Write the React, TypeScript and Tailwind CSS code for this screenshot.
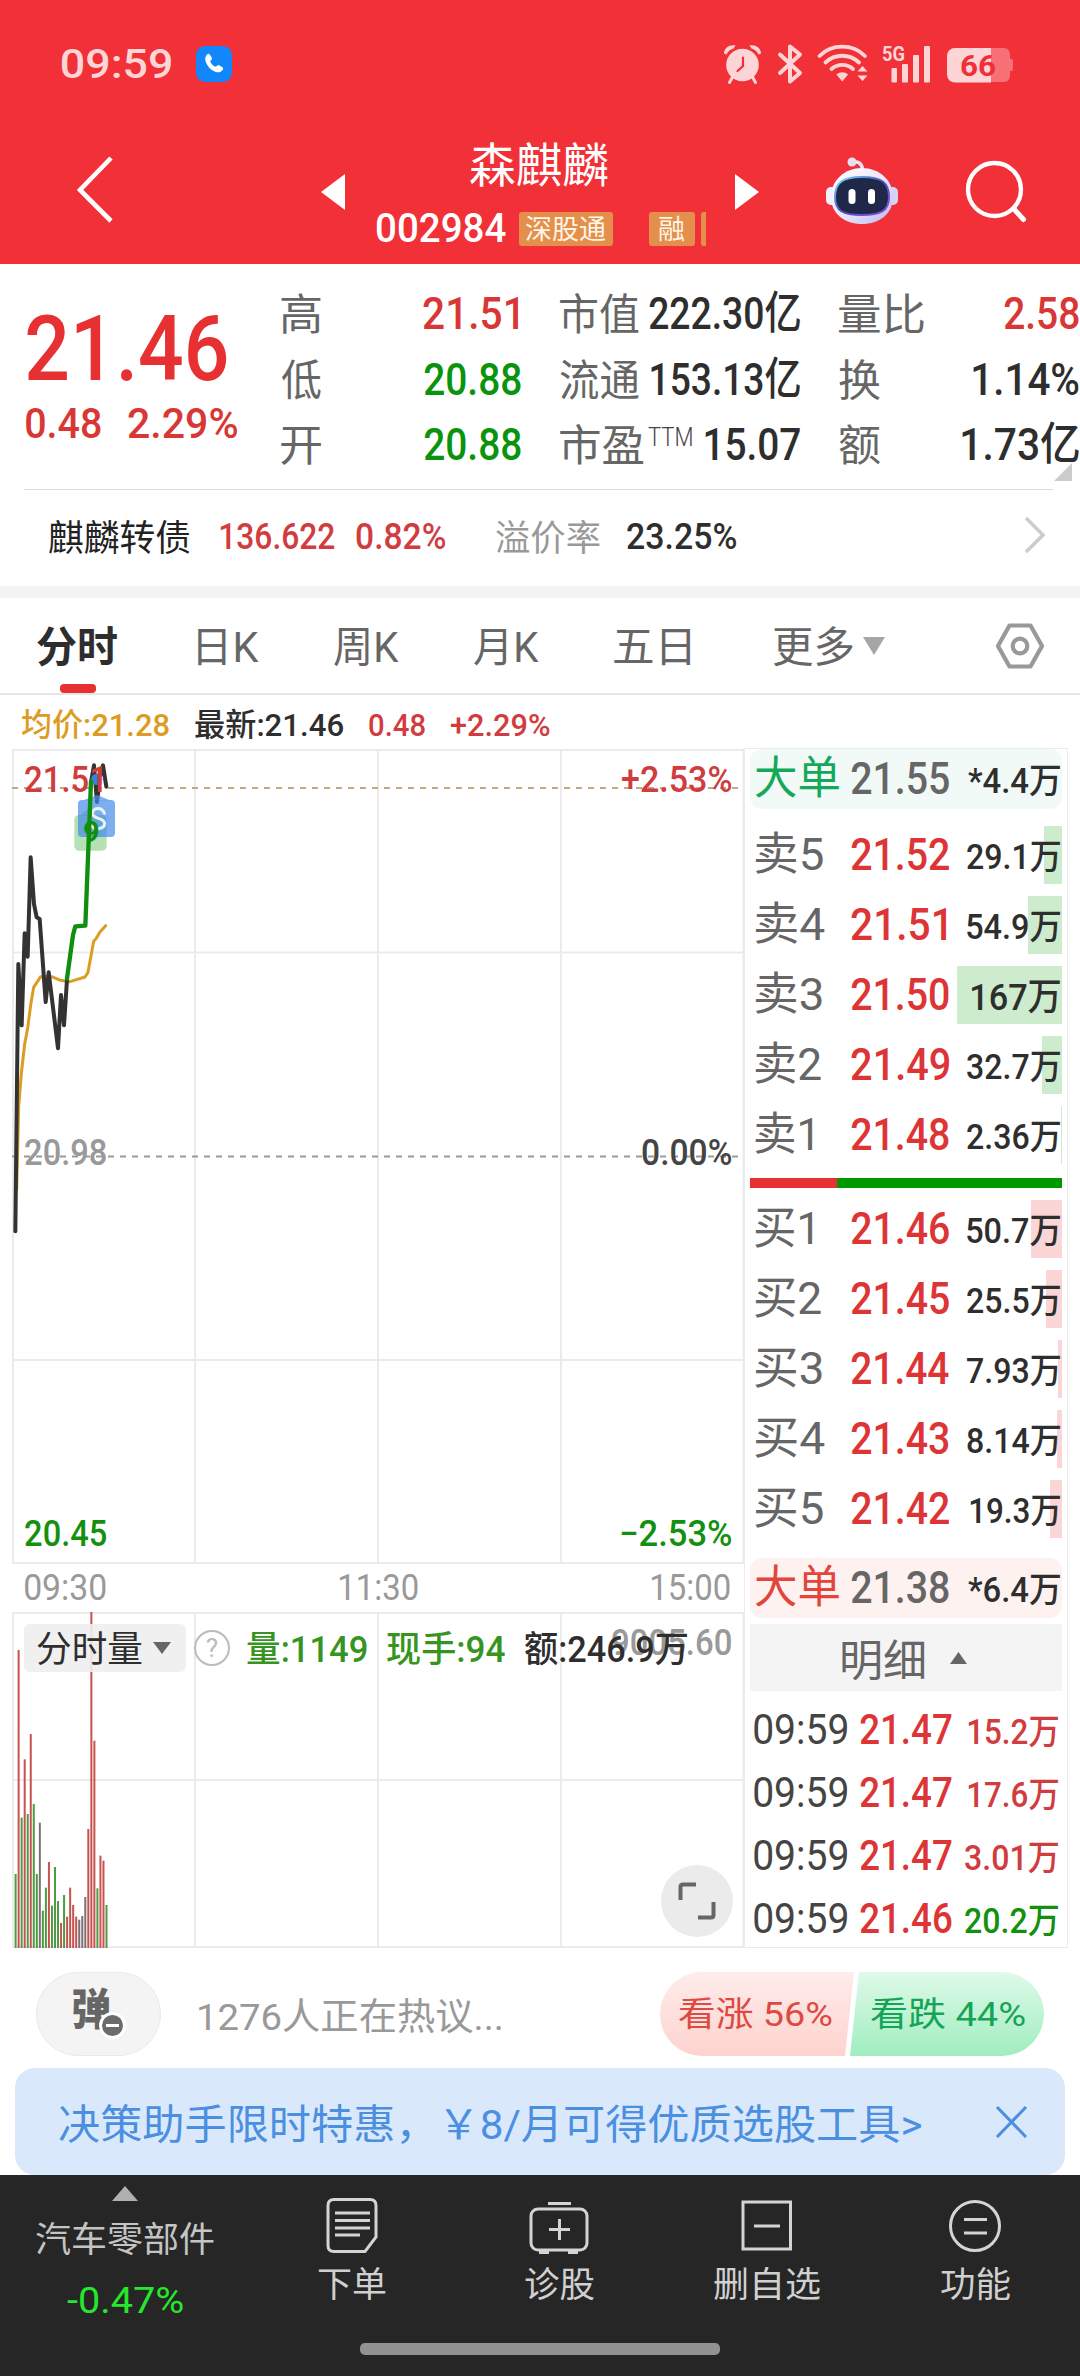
import { useLayoutEffect, useRef } from "react";
import type { ReactNode } from "react";
import clsx from "clsx";

// Text drawn so that its ink spans exactly the width of its box.
function Fit({ children, className = "" }: { children: string; className?: string }) {
  const box = useRef<HTMLDivElement>(null);
  const ink = useRef<HTMLSpanElement>(null);
  useLayoutEffect(() => {
    if (!box.current || !ink.current) return;
    const cs = getComputedStyle(ink.current);
    const ctx = document.createElement("canvas").getContext("2d");
    if (!ctx) return;
    ctx.font = `${cs.fontWeight} ${cs.fontSize} ${cs.fontFamily}`;
    const m = ctx.measureText(children);
    const start = -m.actualBoundingBoxLeft;
    const width = m.actualBoundingBoxRight - start;
    const s = box.current.clientWidth / width;
    const drop = /[\u4e00-\u9fff]/.test(children) && !/\d/.test(children) ? 2 : 0;
    ink.current.style.transform = `translate(${-start * s}px, ${drop}px) scaleX(${s})`;
  }, [children]);
  return (
    <div ref={box} className={clsx("shrink-0 leading-none", className)}>
      <span ref={ink} className="block w-max origin-left whitespace-pre leading-none">
        {children}
      </span>
    </div>
  );
}

function StatusBar() {
  return (
    <div className="flex h-[128px] items-center text-[#fdd5d7]">
      <Fit className="ml-[62px] w-[109px] text-[41px] font-medium">09:59</Fit>
      <div className="ml-[25px] flex h-[36px] w-[36px] items-center justify-center rounded-[9px] bg-[#1287fb]">
        <svg viewBox="0 0 24 24" className="h-[22px] w-[22px]" fill="#fff">
          <path d="M4.5 1.5c1-.9 2.300-.7 3 .3l2 3.200c.6 1 .3 2-.5 2.700l-1.300 1.200c1.200 2.900 3.300 5 6.200 6.200l1.500-1.300c.8-.7 1.800-.8 2.700-.2l3 2c1 .7 1.200 2 .3 3-1.900 2.300-4.300 3.100-7.300 2.100C8.600 19 4.800 15 2.900 9.400 1.900 6.300 2.500 3.500 4.500 1.500z" />
        </svg>
      </div>
      <svg className="ml-[488px] h-[48px] w-[300px]" viewBox="0 0 300 48" fill="#fdd5d7">
        <circle cx="22.500" cy="25" r="16.300" />
        <path d="M4 13.500C4 8 9 4.500 15.500 5.300L13.500 8.500C10 9.500 7.700 11.500 6.500 14.500zM41 13.500C41 8 36 4.500 29.500 5.300L31.500 8.500C35 9.500 37.300 11.500 38.500 14.500z" />
        <path d="M12.500 37l-3 5.500M32.500 37l3 5.500" stroke="#fdd5d7" strokeWidth="3" strokeLinecap="round" />
        <path d="M23 17.500v8.500l-5.500 5" fill="none" stroke="#f12f37" strokeWidth="2.200" strokeLinecap="round" />
        <path d="M60 14.500l20 18.500-10 8.500v-35l10 8-20 18.500" fill="none" stroke="#fdd5d7" strokeWidth="4" strokeLinejoin="round" strokeLinecap="round" />
        <g fill="none" stroke="#fdd5d7" strokeWidth="3.800" strokeLinecap="round">
          <path d="M99.500 16c12-12.500 33.500-12.500 45.500 0" />
          <path d="M105.500 22.500c9.500-9 24-9 33.500 0" />
          <path d="M111.500 29c6-5.500 15.500-5.500 21.500 0" />
        </g>
        <path d="M116.500 34.500c3.500-3 8.300-3 11.500 0l-5.800 7zM137.500 31.500l5-5.500 5 5.500zM137.500 35.500l5 5.500 5-5.500z" />
        <text x="162" y="20.500" fontSize="20" fontWeight="700" textLength="23" lengthAdjust="spacingAndGlyphs">5G</text>
        <rect x="171.500" y="28" width="5.500" height="14.500" rx="1" />
        <rect x="182" y="24" width="6" height="18.500" rx="1" />
        <rect x="193" y="15" width="6" height="27.500" rx="1" />
        <rect x="204" y="6" width="6" height="36.500" rx="1" />
        <path d="M271 8h13a6 6 0 0 1 6 6v22a6 6 0 0 1-6 6h-13zM290 19h1.500q1.500 0 1.500 2v8q0 2-1.500 2H290z" fill="#f77075" />
        <path d="M235 8h36v34.500h-36a8 8 0 0 1-8-8V16a8 8 0 0 1 8-8z" />
        <text x="240" y="36" fontSize="30" fontWeight="700" fill="#f12f37" textLength="36" lengthAdjust="spacingAndGlyphs">66</text>
      </svg>
    </div>
  );
}

function Tag({ children, className = "" }: { children?: ReactNode; className?: string }) {
  return (
    <div className={clsx("flex h-[34px] shrink-0 items-center justify-center rounded-[3px] bg-[#e48f4c] text-[#fff5e6]", className)}>
      {children}
    </div>
  );
}

function Robot() {
  return (
    <svg className="mt-[-10px] ml-[66px] h-[70px] w-[74px]" viewBox="0 0 74 70">
      <defs>
        <linearGradient id="shell" x1="0" y1="0" x2="1" y2="1">
          <stop offset="0" stopColor="#fff" />
          <stop offset="0.500" stopColor="#ece8fa" />
          <stop offset="1" stopColor="#b9b9f0" />
        </linearGradient>
        <linearGradient id="rim" x1="0" y1="0" x2="1" y2="1">
          <stop offset="0" stopColor="#7ce3f5" />
          <stop offset="0.500" stopColor="#4d4fc0" />
          <stop offset="1" stopColor="#8f4be0" />
        </linearGradient>
      </defs>
      <path d="M27 6c6-1 10 1 10.500 8" fill="none" stroke="#efe6f7" strokeWidth="3.500" />
      <circle cx="27" cy="6" r="4.500" fill="#e9def3" />
      <rect x="1" y="31" width="12" height="18" rx="5" fill="#f3effc" />
      <rect x="61" y="31" width="12" height="18" rx="5" fill="#d6d2f5" />
      <path d="M37 12c17 0 31 12 31 29S54 68 37 68 6 58 6 41 20 12 37 12z" fill="url(#shell)" />
      <path d="M37 21c20 0 27 6 27 20S56 59 37 59 10 55 10 41s7-20 27-20z" fill="#1f2848" stroke="url(#rim)" strokeWidth="2" />
      <rect x="23.500" y="33" width="7" height="15" rx="3.500" fill="#fff" />
      <rect x="43" y="33" width="7" height="15" rx="3.500" fill="#fff" />
    </svg>
  );
}

function TitleBar() {
  return (
    <div className="flex h-[136px] items-center text-white">
      <svg className="mt-[-14px] ml-[72px] h-[72px] w-[46px]" viewBox="0 0 46 72" fill="none" stroke="#fff" strokeWidth="4.600">
        <path d="M39 5L8 37l31 31" />
      </svg>
      <svg className="ml-[203px] mt-[-8px] h-[36px] w-[24px]" viewBox="0 0 24 36" fill="#fff">
        <path d="M24 0v36L0 18z" />
      </svg>
      <div className="ml-[32px] flex h-[136px] w-[358px] shrink-0 flex-col">
        <Fit className="mt-[12px] ml-[93px] w-[138px] text-[47px]">森麒麟</Fit>
        <div className="mt-[21px] flex h-[41px] items-center">
          <Fit className="w-[129px] text-[41px] font-medium">002984</Fit>
          <Tag className="ml-[13px] w-[94px]">
            <Fit className="w-[80px] text-[27px]">深股通</Fit>
          </Tag>
          <Tag className="ml-[36px] w-[46px]">
            <Fit className="w-[26px] text-[27px]">融</Fit>
          </Tag>
          <Tag className="ml-[6px] w-[5px] rounded-r-none" />
        </div>
      </div>
      <svg className="mt-[-8px] h-[36px] w-[24px]" viewBox="0 0 24 36" fill="#fff">
        <path d="M0 0v36l24-18z" />
      </svg>
      <Robot />
      <svg className="ml-[64px] mt-[-10px] h-[66px] w-[66px]" viewBox="0 0 66 66" fill="none" stroke="#fff" strokeWidth="4.300">
        <circle cx="31.500" cy="31.500" r="26.500" />
        <path d="M50.500 50.500l10 11" strokeLinecap="round" strokeWidth="5" />
      </svg>
    </div>
  );
}

function QuoteRow({ children }: { children: ReactNode }) {
  return <div className="flex h-[65.500px] items-center gap-[39px]">{children}</div>;
}
function QuoteCell({ children }: { children: ReactNode }) {
  return <div className="flex w-[240px] items-center justify-between text-[45px] font-medium text-[#2e2e2e]">{children}</div>;
}
const label = "text-[43px] font-normal text-[#666]";

function Quote() {
  return (
    <div className="flex h-[225px]">
      <div className="w-[281px] shrink-0 pl-[27px] font-medium text-[#d93636]">
        <Fit className="mt-[40px] w-[200px] text-[91px] text-[#e73032]">21.46</Fit>
        <div className="mt-[7px] flex">
          <Fit className="ml-[-1px] w-[75px] text-[43px]">0.48</Fit>
          <Fit className="ml-[27px] w-[109px] text-[43px]">2.29%</Fit>
        </div>
      </div>
      <div className="relative w-[799px] pt-[17px]">
        <QuoteRow>
          <QuoteCell>
            <Fit className={clsx(label, "w-[40px]")}>高</Fit>
            <Fit className="mr-[3px] w-[95px] text-[#d93636]">21.51</Fit>
          </QuoteCell>
          <QuoteCell>
            <Fit className={clsx(label, "w-[79px]")}>市值</Fit>
            <Fit className="w-[151px]">222.30亿</Fit>
          </QuoteCell>
          <QuoteCell>
            <Fit className={clsx(label, "w-[85px]")}>量比</Fit>
            <Fit className="w-[75px] text-[#d93636]">2.58</Fit>
          </QuoteCell>
        </QuoteRow>
        <QuoteRow>
          <QuoteCell>
            <Fit className={clsx(label, "w-[40px]")}>低</Fit>
            <Fit className="w-[97px] text-[#0a930c]">20.88</Fit>
          </QuoteCell>
          <QuoteCell>
            <Fit className={clsx(label, "w-[79px]")}>流通</Fit>
            <Fit className="w-[149px]">153.13亿</Fit>
          </QuoteCell>
          <QuoteCell>
            <Fit className={clsx(label, "w-[41px]")}>换</Fit>
            <Fit className="w-[106px]">1.14%</Fit>
          </QuoteCell>
        </QuoteRow>
        <QuoteRow>
          <QuoteCell>
            <Fit className={clsx(label, "w-[40px]")}>开</Fit>
            <Fit className="w-[97px] text-[#0a930c]">20.88</Fit>
          </QuoteCell>
          <QuoteCell>
            <Fit className={clsx(label, "w-[84px]")}>市盈</Fit>
            <Fit className="mt-[-15px] mr-[9px] w-[44px] text-[25px] font-light text-[#444]">TTM</Fit>
            <Fit className="w-[95px]">15.07</Fit>
          </QuoteCell>
          <QuoteCell>
            <Fit className={clsx(label, "w-[41px]")}>额</Fit>
            <Fit className="w-[117px]">1.73亿</Fit>
          </QuoteCell>
        </QuoteRow>
        <svg className="absolute top-[199px] left-[773px] h-[18px] w-[18px]" viewBox="0 0 18 18" fill="#ccc">
          <path d="M18 0v18H0z" />
        </svg>
      </div>
    </div>
  );
}

function BondRow() {
  return (
    <div className="flex h-[96px] items-center pb-[2px] text-[36px] font-medium text-[#d13c3e]">
      <Fit className="ml-[49px] w-[141px] font-normal text-[#222]">麒麟转债</Fit>
      <Fit className="ml-[30px] w-[115px]">136.622</Fit>
      <Fit className="ml-[21px] w-[89px]">0.82%</Fit>
      <Fit className="ml-[51px] w-[104px] font-normal text-[#999]">溢价率</Fit>
      <Fit className="ml-[27px] w-[109px] text-[#2e2e2e]">23.25%</Fit>
      <svg className="ml-[288px] mt-[-4px] h-[38px] w-[22px]" viewBox="0 0 22 38" fill="none" stroke="#ccc" strokeWidth="3.500">
        <path d="M2 2l17 17L2 36" />
      </svg>
    </div>
  );
}

function Tabs() {
  return (
    <div className="relative flex h-[97px] items-center border-b-2 border-[#e6e6e6] text-[42px] text-[#666]">
      <Fit className="ml-[37px] w-[80px] font-bold text-[#2e2e2e]">分时</Fit>
      <Fit className="ml-[81px] w-[61px]">日K</Fit>
      <Fit className="ml-[75px] w-[65px]">周K</Fit>
      <Fit className="ml-[75px] w-[65px]">月K</Fit>
      <Fit className="ml-[75px] w-[76px]">五日</Fit>
      <Fit className="ml-[83px] w-[80px]">更多</Fit>
      <svg className="ml-[10px] h-[18px] w-[22px]" viewBox="0 0 22 18" fill="#a6a6a6">
        <path d="M0 0h22L11 18z" />
      </svg>
      <svg className="ml-[110px] h-[48px] w-[50px]" viewBox="0 0 50 48" fill="none" stroke="#999" strokeWidth="4.200" strokeLinejoin="round">
        <path d="M14.500 3.500h21L47 24 35.500 44.500h-21L3 24z" />
        <circle cx="25" cy="24" r="7.300" />
      </svg>
      <div className="absolute bottom-0 left-[60px] h-[9px] w-[36px] rounded-[4px] bg-[#e63031]" />
    </div>
  );
}

function InfoLine() {
  return (
    <div className="flex h-[53px] items-center pt-[7px] text-[32px] font-medium text-[#d13c3e]">
      <Fit className="ml-[22px] w-[147px] text-[#dc9c22]">均价:21.28</Fit>
      <Fit className="ml-[26px] w-[148px] text-[#2e2e2e]">最新:21.46</Fit>
      <Fit className="ml-[26px] w-[56px]">0.48</Fit>
      <Fit className="ml-[26px] w-[99px]">+2.29%</Fit>
    </div>
  );
}

function PriceChart() {
  return (
    <div className="relative h-[816px] text-[36px] font-medium">
      <svg className="block h-[816px] w-[745px]" viewBox="0 748 745 816" fill="none">
        <g stroke="#ebebeb" strokeWidth="2">
          <path d="M12 750H744M12 952.500H744M12 1360H744M12 1563H744" />
          <path d="M13 749V1564M195 749V1564M378 749V1564M561 749V1564M743.500 749V1564" />
        </g>
        <path d="M12 788H740" stroke="#c2a884" strokeWidth="2" strokeDasharray="6 6" />
        <path d="M12 1156.500H740" stroke="#999" strokeWidth="2" strokeDasharray="6 6" />
        <g transform="translate(0 740) scale(0.33333)" strokeLinejoin="round" strokeLinecap="round">
          <path d="M50 1350L56 1100L64 1000L74 912L83 865L92 795L101 742L122 710H155L178 720L210 725L255 711L264 697L281 604L288 596L300 576L317 557" stroke="#dc9c22" strokeWidth="9" />
          <path d="M46 1474L55 672L65 856L74 580L83 650L92 352L102 492L110 532L119 537L137 786L146 697L174 925L183 765L192 856L201 718" stroke="#333" strokeWidth="12" />
          <path d="M273 126L282 76L291 186L300 110L309 76L319 140" stroke="#333" strokeWidth="12" />
          <rect x="223" y="225" width="97" height="107" rx="14" fill="#6cc46c" fillOpacity="0.500" />
          <path d="M238 228L265 205L290 228z" fill="#6cc46c" fillOpacity="0.500" />
          <path d="M250 181L291 165L330 181z" fill="#4f8fe8" fillOpacity="0.700" />
          <rect x="234" y="180" width="111" height="111" rx="12" fill="#3f87ea" fillOpacity="0.680" />
          <circle cx="290" cy="118" r="17" fill="#3f7fd8" />
          <path d="M313 220C306 200 278 202 277 220C277 238 313 232 314 250C314 268 284 272 274 256" stroke="#e8f5ef" strokeWidth="9" />
          <path d="M273 124L256 557L226 559L219 585L201 716" stroke="#0f8f10" strokeWidth="13" />
        </g>
        <text x="83" y="842" fontSize="29" fontWeight="700" fill="#0f8f10">9</text>
      </svg>
      <Fit className="absolute top-[14px] left-[25px] w-[77px] text-[#d13c3e]">21.51</Fit>
      <Fit className="absolute top-[14px] left-[622px] w-[109px] text-[#d13c3e]">+2.53%</Fit>
      <Fit className="absolute top-[387px] left-[25px] w-[81px] text-[#999]">20.98</Fit>
      <Fit className="absolute top-[387px] left-[642px] w-[89px] text-[#444]">0.00%</Fit>
      <Fit className="absolute top-[768px] left-[25px] w-[81px] text-[#14900f]">20.45</Fit>
      <Fit className="absolute top-[768px] left-[621px] w-[110px] text-[#14900f]">−2.53%</Fit>
    </div>
  );
}

// Height of each bar as a y position in chart space, with its colour.
const bars: [number, string][] = [
  [1122, "g"], [450, "r"], [953, "g"], [778, "r"], [942, "g"], [702, "r"], [912, "g"], [1122, "g"],
  [968, "n"], [1232, "g"], [1163, "g"], [1086, "r"], [1217, "g"], [1101, "g"], [1203, "g"], [1269, "r"],
  [1185, "g"], [1250, "r"], [1163, "r"], [1215, "r"], [1250, "r"], [1259, "n"], [1248, "n"], [1191, "n"],
  [987, "r"], [336, "r"], [722, "r"], [1165, "g"], [1067, "r"], [1082, "r"], [1215, "g"],
];
const barColor: Record<string, string> = { g: "#4f9a45", r: "#c8524f", n: "#7d7075" };

function VolumeChart() {
  return (
    <div className="relative h-[336px] text-[36px] font-medium">
      <svg className="block h-[336px] w-[745px]" viewBox="0 1612 745 336" fill="none">
        <g stroke="#ebebeb" strokeWidth="2">
          <path d="M12 1613H744M12 1780H744M12 1947H744" />
          <path d="M13 1612V1948M195 1612V1948M378 1612V1948M561 1612V1948M743.500 1612V1948" />
        </g>
        {bars.map(([top, c], i) => (
          <rect key={i} x={14.600 + i * 3.030} y={1500 + top / 3} width="2" height={448 - top / 3} fill={barColor[c]} />
        ))}
      </svg>
      <Fit className="absolute top-[13px] left-[612px] w-[119px] text-[#999]">9005.60</Fit>
      <div className="absolute top-[12px] left-[24px] flex h-[48px] items-center">
        <div className="flex h-[48px] w-[162px] items-center rounded-[6px] bg-[#eeeeee]/90 pl-[13px] text-[#2e2e2e]">
          <Fit className="w-[105px] font-normal">分时量</Fit>
          <svg className="ml-[11px] h-[12px] w-[18px]" viewBox="0 0 18 12" fill="#666">
            <path d="M0 0h18L9 12z" />
          </svg>
        </div>
        <div className="ml-[8px] flex h-[36px] w-[36px] items-center justify-center rounded-full border-2 border-[#bbb] text-[26px] leading-none font-normal text-[#bbb]">?</div>
        <Fit className="ml-[17px] mt-[3px] w-[120px] text-[#37941f]">量:1149</Fit>
        <Fit className="ml-[20px] mt-[3px] w-[118px] text-[#37941f]">现手:94</Fit>
        <Fit className="ml-[20px] mt-[3px] w-[162px] text-[#2e2e2e]">额:246.9万</Fit>
      </div>
      <div className="absolute top-[253px] left-[661px] flex h-[72px] w-[72px] items-center justify-center rounded-full bg-[#ebebeb]">
        <svg className="h-[38px] w-[38px]" viewBox="0 0 38 38" fill="none" stroke="#666" strokeWidth="4">
          <path d="M2.500 18V5q0-2.500 2.500-2.500h13M35.500 20v13q0 2.500-2.500 2.500H20" />
        </svg>
      </div>
    </div>
  );
}

interface Level {
  name: string;
  nameClass: string;
  price: string;
  qty: string;
  qtyClass: string;
  bar: string;
}
const sells: Level[] = [
  { name: "卖5", nameClass: "w-[68px]", price: "21.52", qty: "29.1万", qtyClass: "w-[93px]", bar: "w-[18px]" },
  { name: "卖4", nameClass: "w-[70px]", price: "21.51", qty: "54.9万", qtyClass: "w-[93px]", bar: "w-[34px]" },
  { name: "卖3", nameClass: "w-[67px]", price: "21.50", qty: "167万", qtyClass: "w-[88px] text-[37px]", bar: "w-[105px]" },
  { name: "卖2", nameClass: "w-[66px]", price: "21.49", qty: "32.7万", qtyClass: "w-[93px]", bar: "w-[20px]" },
  { name: "卖1", nameClass: "w-[58px]", price: "21.48", qty: "2.36万", qtyClass: "w-[93px]", bar: "w-[1px]" },
];
const buys: Level[] = [
  { name: "买1", nameClass: "w-[58px]", price: "21.46", qty: "50.7万", qtyClass: "w-[93px]", bar: "w-[31px]" },
  { name: "买2", nameClass: "w-[66px]", price: "21.45", qty: "25.5万", qtyClass: "w-[93px]", bar: "w-[16px]" },
  { name: "买3", nameClass: "w-[67px]", price: "21.44", qty: "7.93万", qtyClass: "w-[93px]", bar: "w-[4px]" },
  { name: "买4", nameClass: "w-[70px]", price: "21.43", qty: "8.14万", qtyClass: "w-[93px]", bar: "w-[5px]" },
  { name: "买5", nameClass: "w-[68px]", price: "21.42", qty: "19.3万", qtyClass: "w-[90px]", bar: "w-[12px]" },
];

function LevelRow({ row, sell }: { row: Level; sell?: boolean }) {
  return (
    <div className="relative flex h-[58px] items-center">
      <div className={clsx("absolute top-0 right-0 h-[58px]", sell ? "bg-[#cdebcd]" : "bg-[#fad6d6]", row.bar)} />
      <div className="relative mt-[-2px] w-[101px] pl-[5px] text-[45px] text-[#666]">
        <Fit className={row.nameClass}>{row.name}</Fit>
      </div>
      <Fit className={clsx("relative mt-[-2px] text-[45px] font-medium text-[#dd3435]", row.price.endsWith("1") ? "w-[95px]" : "w-[98px]")}>{row.price}</Fit>
      <div className="relative flex flex-1 justify-end pt-[5px] pr-[2px] text-[35px] font-medium text-[#2e2e2e]">
        <Fit className={row.qtyClass}>{row.qty}</Fit>
      </div>
    </div>
  );
}

function BigOrder({ price, qty, buy }: { price: string; qty: string; buy?: boolean }) {
  return (
    <div className={clsx("flex h-[60px] items-center rounded-[12px] pl-[5px] font-medium", buy ? "bg-[#fef2f1]" : "bg-[#f1faf6]")}>
      <Fit className={clsx("mt-[-6px] w-[84px] text-[45px] font-normal", buy ? "text-[#e2453c]" : "text-[#16a85a]")}>大单</Fit>
      <Fit className="ml-[12px] mt-[-2px] w-[98px] text-[45px] text-[#666]">{price}</Fit>
      <Fit className="ml-[19px] mt-[5px] w-[92px] text-[35px] text-[#2e2e2e]">{qty}</Fit>
    </div>
  );
}

const ticks = [
  ["21.47", "15.2万", "w-[90px] text-[#d13c3e]"],
  ["21.47", "17.6万", "w-[90px] text-[#d13c3e]"],
  ["21.47", "3.01万", "w-[93px] text-[#d13c3e]"],
  ["21.46", "20.2万", "w-[93px] text-[#14900f]"],
];

function OrderBook() {
  return (
    <div className="h-[1200px] w-[324px] border border-[#ebebeb] pr-[5px] pl-[5px]">
      <BigOrder price="21.55" qty="*4.4万" />
      <div className="mt-[17px] flex flex-col gap-[12px]">
        {sells.map((r) => (
          <LevelRow key={r.name} row={r} sell />
        ))}
      </div>
      <div className="mt-[14px] flex h-[10px]">
        <div className="w-[87px] bg-[#e83133]" />
        <div className="flex-1 bg-[#009a00]" />
      </div>
      <div className="mt-[12px] flex flex-col gap-[12px]">
        {buys.map((r) => (
          <LevelRow key={r.name} row={r} />
        ))}
      </div>
      <div className="mt-[20px]">
        <BigOrder price="21.38" qty="*6.4万" buy />
      </div>
      <div className="mt-[6px] flex h-[67px] items-center bg-[#f4f4f4] text-[43px] text-[#666]">
        <Fit className="ml-[92px] mt-[3px] w-[82px]">明细</Fit>
        <svg className="ml-[26px] h-[12px] w-[17px]" viewBox="0 0 17 12" fill="#666">
          <path d="M8.500 0L17 12H0z" />
        </svg>
      </div>
      <div className="mt-[7px]">
        {ticks.map(([price, qty, qtyClass], i) => (
          <div key={i} className="flex h-[63px] items-center font-medium">
            <Fit className="ml-[4px] w-[93px] text-[42px] font-normal text-[#444]">09:59</Fit>
            <Fit className="ml-[13px] w-[92px] text-[42px] text-[#dd3435]">{price}</Fit>
            <div className="flex flex-1 justify-end pt-[5px] pr-[4px] text-[35px]">
              <Fit className={qtyClass}>{qty}</Fit>
            </div>
          </div>
        ))}
      </div>
    </div>
  );
}

function Discussion() {
  return (
    <div className="flex h-[120px] items-start pt-[24px]">
      <div className="relative ml-[36px] h-[84px] w-[125px] rounded-full border border-[#e9e9e9] bg-[#f4f4f4]">
        <Fit className="absolute top-[14px] left-[36px] w-[37px] text-[43px] font-black text-[#666]">弹</Fit>
        <div className="absolute top-[39px] left-[62px] flex h-[27px] w-[27px] items-center justify-center rounded-full border-[3px] border-white bg-[#6b6b6b]">
          <div className="h-[3px] w-[13px] bg-white" />
        </div>
      </div>
      <Fit className="ml-[38px] mt-[27px] w-[302px] text-[37px] text-[#999]">1276人正在热议...</Fit>
      <div className="relative ml-[159px] flex h-[84px] w-[384px] items-center">
        <svg className="absolute inset-0 h-[84px] w-[384px]" viewBox="0 0 384 84">
          <defs>
            <linearGradient id="up" x1="0" y1="0" x2="0" y2="1">
              <stop offset="0" stopColor="#feeceb" />
              <stop offset="1" stopColor="#fdd3ce" />
            </linearGradient>
            <linearGradient id="down" x1="0" y1="0" x2="0" y2="1">
              <stop offset="0" stopColor="#dffaea" />
              <stop offset="1" stopColor="#a0edc0" />
            </linearGradient>
          </defs>
          <path d="M42 0H194L185 84H42A42 42 0 0 1 42 0z" fill="url(#up)" />
          <path d="M199 0H342A42 42 0 0 1 342 84H190z" fill="url(#down)" />
        </svg>
        <Fit className="relative ml-[19px] w-[153px] text-[34px] text-[#dd4a42]">看涨 56%</Fit>
        <Fit className="relative ml-[39px] w-[154px] text-[34px] text-[#15a456]">看跌 44%</Fit>
      </div>
    </div>
  );
}

function Banner() {
  return (
    <div className="mx-[15px] flex h-[107px] items-center rounded-[20px] bg-[#dae8fc]">
      <Fit className="ml-[44px] mt-[7px] w-[862px] text-[41px] text-[#4a8fe0]">决策助手限时特惠，￥8/月可得优质选股工具&gt;</Fit>
      <svg className="ml-[74px] h-[32px] w-[33px]" viewBox="0 0 33 32" fill="none" stroke="#4a8fe0" strokeWidth="3">
        <path d="M2 1l29 30M31 1L2 31" />
      </svg>
    </div>
  );
}

function NavItem({ className, icon, text, textClass }: { className: string; icon: ReactNode; text: string; textClass: string }) {
  return (
    <div className={clsx("flex w-[120px] shrink-0 flex-col items-center pt-[20px]", className)}>
      <svg className="h-[60px] w-[60px]" viewBox="0 0 60 60" fill="none" stroke="#d4d4d4" strokeWidth="3">
        {icon}
      </svg>
      <Fit className={clsx("mt-[11px] text-[35px] text-[#d0d0d0]", textClass)}>{text}</Fit>
    </div>
  );
}

function BottomNav() {
  return (
    <div className="relative flex h-[201px] bg-[#262626]">
      <div className="flex w-[249px] shrink-0 flex-col items-center pt-[11px]">
        <svg className="h-[15px] w-[26px]" viewBox="0 0 26 15" fill="#b0b0b0">
          <path d="M13 0l13 15H0z" />
        </svg>
        <Fit className="mt-[20px] w-[178px] text-[35px] text-[#c4c4c4]">汽车零部件</Fit>
        <Fit className="mt-[26px] w-[116px] text-[37px] text-[#25e72b]">-0.47%</Fit>
      </div>
      <NavItem
        className="ml-[43px]"
        text="下单"
        textClass="w-[68px]"
        icon={
          <>
            <path d="M12 4.500H48q6 0 6 6V42L43 56.500H12q-6 0-6-6v-40q0-6 6-6z" />
            <path d="M13 18H48M13 25.500H48M13 33H48M13 40H38" />
          </>
        }
      />
      <NavItem
        className="ml-[87px]"
        text="诊股"
        textClass="w-[69px]"
        icon={
          <>
            <rect x="2" y="14" width="56" height="41" rx="7" />
            <path d="M19 8.500H42M30.500 24v21M20 34.500H41M10 57.500H20M39 57.500H49" />
          </>
        }
      />
      <NavItem
        className="ml-[88px]"
        text="删自选"
        textClass="w-[106px]"
        icon={
          <>
            <rect x="6" y="7" width="47.500" height="47" />
            <path d="M17 31H43" />
          </>
        }
      />
      <NavItem
        className="ml-[88px]"
        text="功能"
        textClass="w-[69px]"
        icon={
          <>
            <circle cx="30" cy="31" r="24.500" />
            <path d="M19 24.500H42M19 38H42" />
          </>
        }
      />
      <div className="absolute top-[168px] left-[360px] h-[12px] w-[360px] rounded-[5px] bg-[#919191]" />
    </div>
  );
}

export default function App() {
  return (
    <div className="h-[2376px] w-[1080px] overflow-hidden bg-white font-[Roboto,'Noto_Sans_CJK_SC',sans-serif]">
      <header className="h-[264px] bg-[#f23038]">
        <StatusBar />
        <TitleBar />
      </header>
      <Quote />
      <div className="mr-[27px] ml-[24px] h-px bg-[#dedede]" />
      <BondRow />
      <div className="h-[12px] bg-[#f4f4f4]" />
      <Tabs />
      <InfoLine />
      <div className="flex h-[1200px]">
        <div className="w-[744px] shrink-0">
          <PriceChart />
          <div className="flex h-[48px] items-center pl-[25px] text-[36px] text-[#999]">
            <Fit className="w-[81px]">09:30</Fit>
            <Fit className="ml-[234px] w-[78px]">11:30</Fit>
            <Fit className="ml-[234px] w-[78px]">15:00</Fit>
          </div>
          <VolumeChart />
        </div>
        <OrderBook />
      </div>
      <Discussion />
      <Banner />
      <BottomNav />
    </div>
  );
}
